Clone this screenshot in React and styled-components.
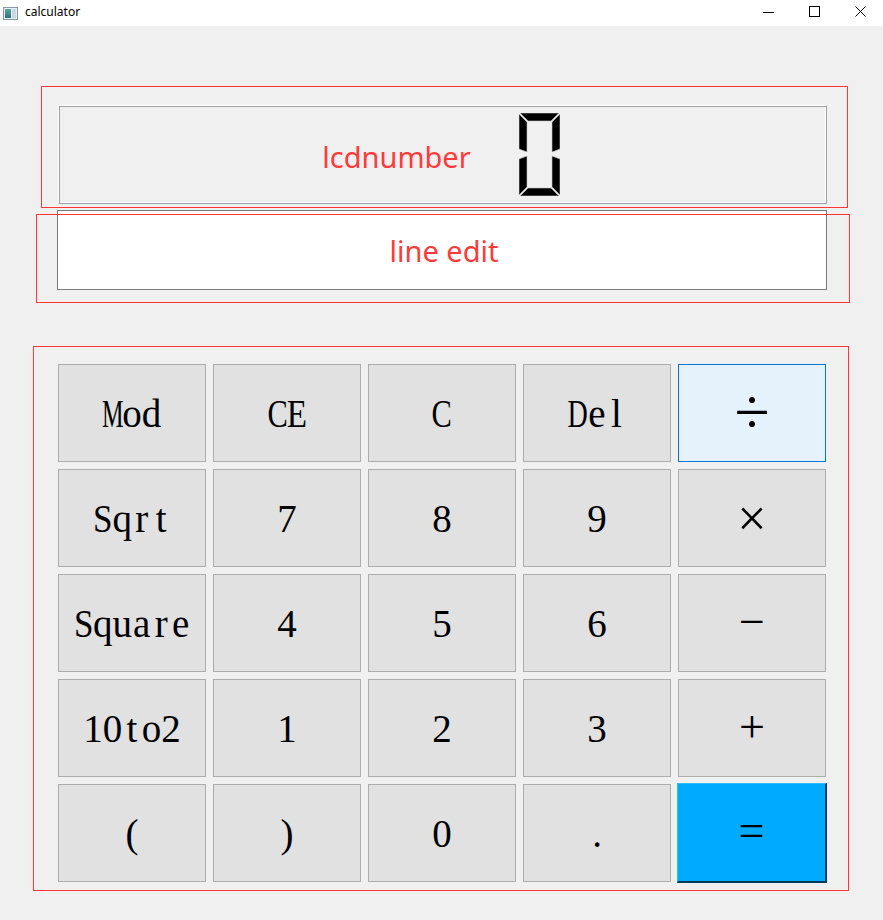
import React from "react";
import styled, { createGlobalStyle } from "styled-components";

const GlobalStyle = createGlobalStyle`
  html, body { margin: 0; padding: 0; background: #f0f0f0; }
  body { font-family: "Noto Sans", "Liberation Sans", sans-serif; }
  * { box-sizing: border-box; }
`;

const Window = styled.div`
  width: 883px;
  height: 920px;
  background: #f0f0f0;
  display: flex;
  flex-direction: column;
  overflow: hidden;
`;

const TitleBar = styled.div`
  height: 26px;
  background: #ffffff;
  display: flex;
  align-items: center;
  padding-left: 3px;
  flex: none;
`;

const TitleText = styled.span`
  margin-left: 7px;
  font-family: "Noto Sans", "Liberation Sans", sans-serif;
  font-size: 12px;
  color: #000;
  line-height: 1;
  margin-top: -3px;
`;

const Controls = styled.div`
  margin-left: auto;
  display: flex;
  align-items: center;
  height: 100%;
`;

const ControlBtn = styled.div`
  width: 46px;
  height: 100%;
  display: flex;
  align-items: center;
  justify-content: center;
  padding-bottom: 4px;
`;

const Content = styled.div`
  display: flex;
  flex-direction: column;
  align-items: flex-start;
  padding: 79px 0 0 57px;
`;

const Group = styled.div`
  position: relative;
  margin-top: ${(p) => p.$mt || 0}px;
  margin-left: ${(p) => p.$ml || 0}px;
`;

const Outline = styled.div`
  position: absolute;
  top: ${(p) => p.$t}px;
  left: ${(p) => p.$l}px;
  right: ${(p) => p.$r}px;
  bottom: ${(p) => p.$b}px;
  border: 1px solid #ff3737;
  pointer-events: none;
`;

const LcdFrame = styled.div`
  width: 769px;
  height: 99px;
  border: 1px solid;
  border-color: #ffffff #a0a0a0 #a0a0a0 #ffffff;
  box-shadow: inset 1px 1px 0 #a0a0a0, inset -1px -1px 0 #ffffff;
  display: flex;
  align-items: center;
  justify-content: center;
  gap: 48px;
  padding-right: 3px;
`;

const RedLabel = styled.span`
  font-family: "Noto Sans", "Open Sans", sans-serif;
  font-size: 29px;
  color: #ff3a3a;
  line-height: 1;
  padding-top: ${(p) => p.$pt || 0}px;
`;

const LineEdit = styled.div`
  width: 770px;
  height: 80px;
  background: #ffffff;
  border: 1px solid #7a7a7a;
  display: flex;
  align-items: center;
  justify-content: center;
  padding-left: 4px;
`;

const Keypad = styled.div`
  display: grid;
  grid-template-columns: repeat(5, 148px);
  grid-template-rows: repeat(5, 98px);
  gap: 7px;
`;

const KeyButton = styled.button`
  margin: 0;
  padding: 0;
  font-family: "Liberation Serif", "Times New Roman", serif;
  font-size: 39px;
  font-weight: 400;
  line-height: 1;
  color: #000;
  display: flex;
  align-items: center;
  justify-content: center;
  background: #e1e1e1;
  border: 1px solid #adadad;
  ${(p) =>
    p.$variant === "hover" &&
    `
    background: #e5f1fb;
    border-color: #0078d7;
  `}
  ${(p) =>
    p.$variant === "equals" &&
    `
    background: #00aaff;
    border-color: #33bbff #003b5a #003b5a #33bbff;
    border-width: 1px 2px 2px 1px;
    margin: -1px;
  `}
`;

const Glyph = styled.span`
  display: inline-flex;
  justify-content: center;
  width: 19.5px;
  white-space: pre;
  transform: scaleX(${(p) => p.$sx || 1});
`;

const OpGlyph = styled.span`
  font-size: ${(p) => p.$size}px;
  line-height: 1;
  transform: translateY(${(p) => p.$dy || 0}px);
`;

const SCALE = { M: 0.62, C: 0.78, E: 0.85, D: 0.72, S: 0.9 };

function Label({ text }) {
  return (
    <span style={{ display: "inline-flex" }}>
      {text.split("").map((ch, i) => (
        <Glyph key={i} $sx={SCALE[ch]}>
          {ch}
        </Glyph>
      ))}
    </span>
  );
}

const OPS = {
  "÷": { size: 64, dy: -1 },
  "×": { size: 52, dy: 1 },
  "−": { size: 46, dy: -1 },
  "+": { size: 46, dy: -1 },
  "=": { size: 46, dy: -2 },
};

const KEYS = [
  ["Mod", "CE", "C", "Del", "÷"],
  ["Sqrt", "7", "8", "9", "×"],
  ["Square", "4", "5", "6", "−"],
  ["10to2", "1", "2", "3", "+"],
  ["(", ")", "0", ".", "="],
];

function AppIcon() {
  return (
    <svg width="15" height="13" viewBox="0 0 15 13">
      <defs>
        <linearGradient id="ig" x1="0" y1="0" x2="0" y2="1">
          <stop offset="0" stopColor="#5aa6a0" />
          <stop offset="1" stopColor="#2e6f7a" />
        </linearGradient>
      </defs>
      <rect x="0.5" y="0.5" width="14" height="12" fill="#e8eef2" stroke="#8b98a3" />
      <rect x="2" y="2" width="6" height="9" fill="url(#ig)" />
      <rect x="9" y="2" width="4" height="9" fill="#c9d9e4" />
    </svg>
  );
}

function LcdZero() {
  const segs = [
    "1,0 40,0 32,8 9,8",
    "0,1 8,9 8,39 0,36",
    "41,1 33,9 33,39 41,36",
    "0,46 8,43 8,74 0,82",
    "41,46 33,43 33,74 41,82",
    "1,83 40,83 32,75 9,75",
  ];
  return (
    <svg width="41" height="83" viewBox="0 0 41 83">
      {segs.map((p, i) => (
        <polygon key={i} points={p} fill="#000" stroke="#c8c8c8" strokeWidth="0.6" />
      ))}
    </svg>
  );
}

export default function App() {
  return (
    <>
      <GlobalStyle />
      <Window>
        <TitleBar>
          <AppIcon />
          <TitleText>calculator</TitleText>
          <Controls>
            <ControlBtn>
              <svg width="11" height="11" viewBox="0 0 11 11">
                <line x1="0" y1="6.5" x2="11" y2="6.5" stroke="#000" strokeWidth="1" />
              </svg>
            </ControlBtn>
            <ControlBtn>
              <svg width="11" height="11" viewBox="0 0 11 11">
                <rect x="0.5" y="0.5" width="10" height="10" fill="none" stroke="#000" strokeWidth="1" />
              </svg>
            </ControlBtn>
            <ControlBtn>
              <svg width="11" height="11" viewBox="0 0 11 11">
                <path d="M0.5 0.5 L10.5 10.5 M10.5 0.5 L0.5 10.5" stroke="#000" strokeWidth="1" />
              </svg>
            </ControlBtn>
          </Controls>
        </TitleBar>
        <Content>
          <Group $ml={1}>
            <LcdFrame>
              <RedLabel $pt={3}>lcdnumber</RedLabel>
              <LcdZero />
            </LcdFrame>
            <Outline $t={-19} $l={-17} $r={-21} $b={-4} />
          </Group>
          <Group $mt={6}>
            <LineEdit>
              <RedLabel $pt={0}>line edit</RedLabel>
            </LineEdit>
            <Outline $t={4} $l={-21} $r={-23} $b={-13} />
          </Group>
          <Group $mt={74} $ml={1}>
            <Keypad>
              {KEYS.flat().map((k) => {
                const variant = k === "÷" ? "hover" : k === "=" ? "equals" : "default";
                const op = OPS[k];
                return (
                  <KeyButton key={k} $variant={variant}>
                    {op ? (
                      <OpGlyph $size={op.size} $dy={op.dy}>
                        {k}
                      </OpGlyph>
                    ) : (
                      <Label text={k} />
                    )}
                  </KeyButton>
                );
              })}
            </Keypad>
            <Outline $t={-18} $l={-25} $r={-23} $b={-9} />
          </Group>
        </Content>
      </Window>
    </>
  );
}
